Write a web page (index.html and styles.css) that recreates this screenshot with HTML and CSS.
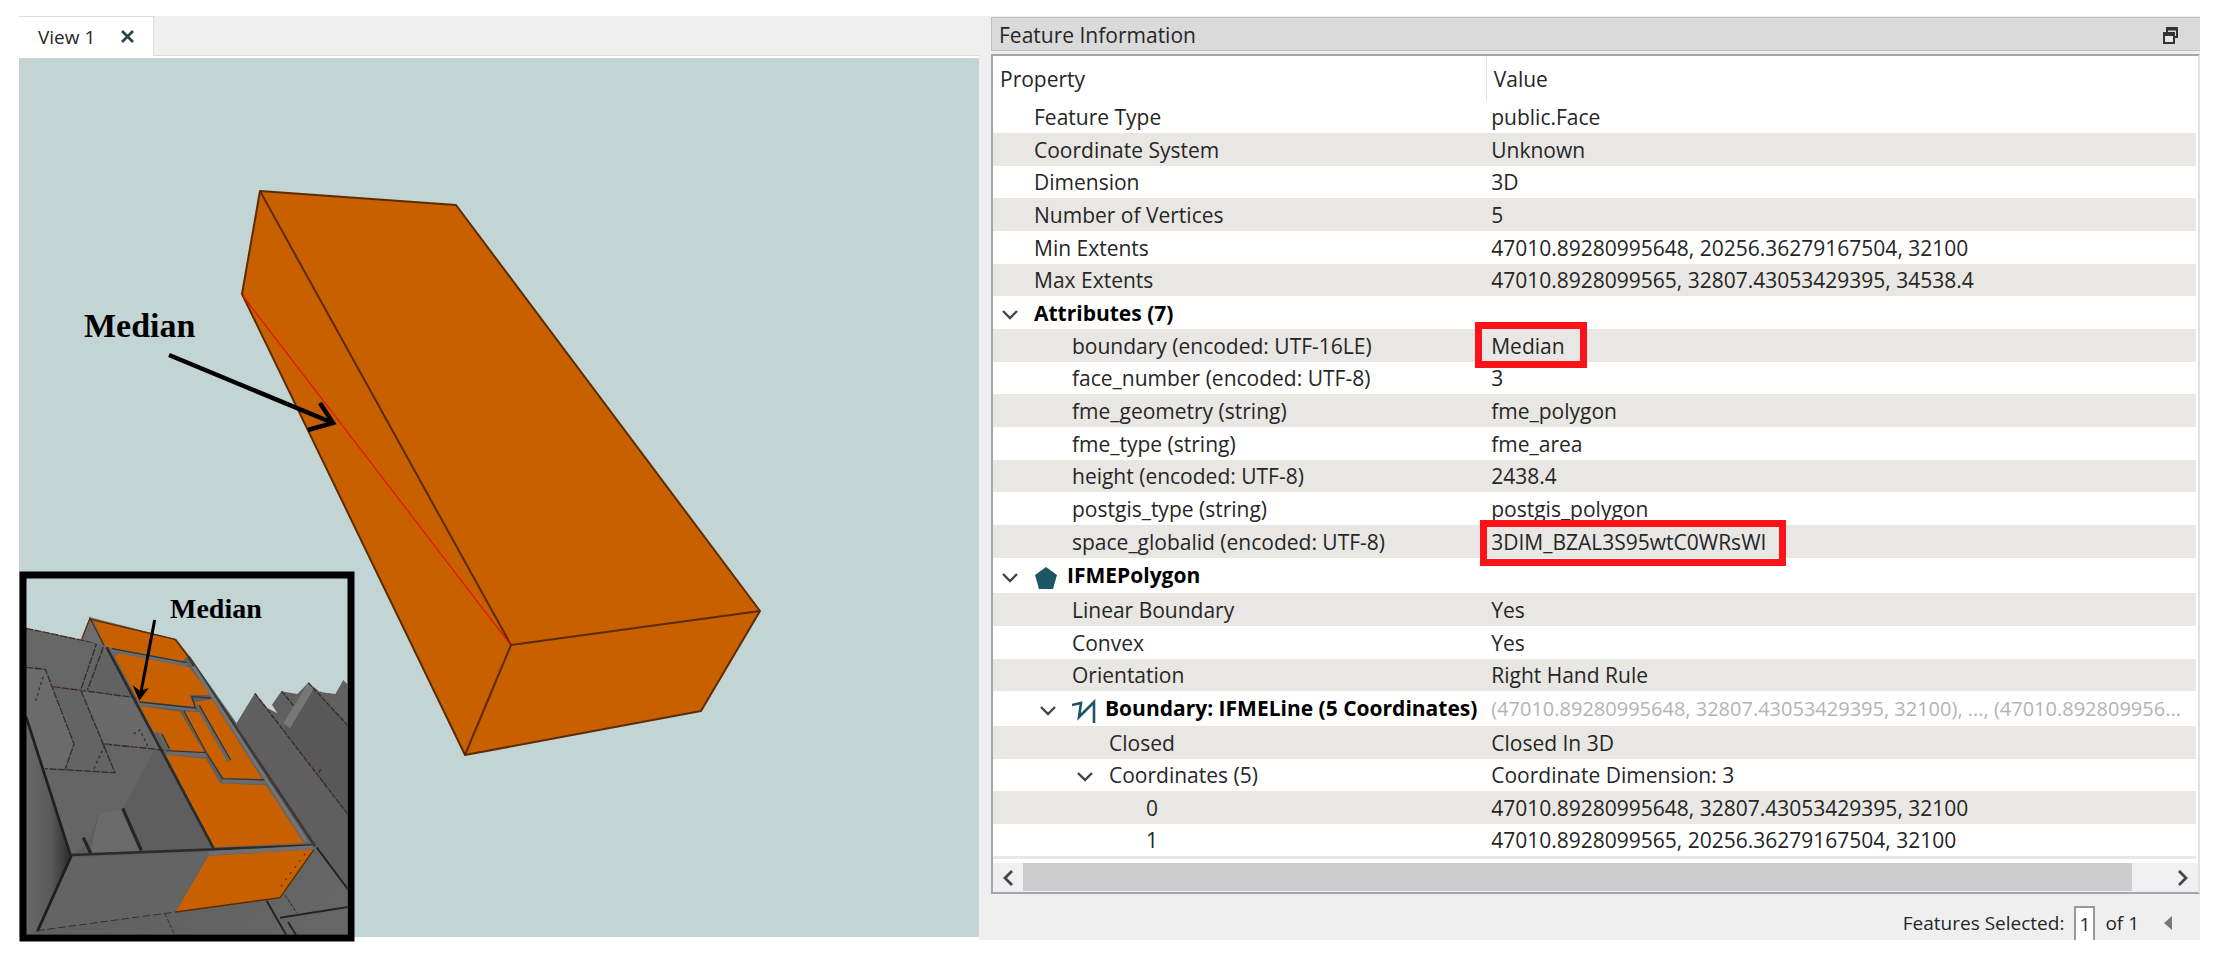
FILE: index.html
```
<!DOCTYPE html>
<html lang="en">
<head>
    <meta charset="UTF-8">
    <meta name="viewport" content="width=device-width, initial-scale=1.0">
    <title>Feature Information</title>
    <link rel="stylesheet" href="styles.css">
</head>
<body>
    <!-- Shared icons -->
    <svg class="icon-defs" aria-hidden="true">
        <symbol id="chevron-down" viewBox="0 0 16 10">
            <path d="M1 1 L8 8 L15 1" fill="none" stroke="#444" stroke-width="2.4"/>
        </symbol>
    </svg>

    <main class="workspace">
        <!-- 3D view -->
        <section class="view-pane">
            <div class="tab-bar">
                <div class="tab">
                    <span>View 1</span>
                    <button class="tab-close" aria-label="Close view">
                        <svg width="13" height="13" viewBox="0 0 13 13"><path d="M1 1 L12 12 M12 1 L1 12" stroke="#2f4650" stroke-width="2.8"/></svg>
                    </button>
                </div>
            </div>
            <div class="canvas">
                <svg class="scene" viewBox="19 58 960 880" role="img" aria-label="Solid with its median boundary">
                    <defs>
                        <linearGradient id="wall" x1="0" y1="0" x2="1" y2="1">
                            <stop offset="0" stop-color="#707070"/>
                            <stop offset="0.35" stop-color="#5d5d5d"/>
                            <stop offset="1" stop-color="#676767"/>
                        </linearGradient>
                        <linearGradient id="shade" x1="0" y1="0" x2="1" y2="0">
                            <stop offset="0" stop-color="#686868"/>
                            <stop offset="0.55" stop-color="#5a5a5a"/>
                            <stop offset="1" stop-color="#2b2b2b"/>
                        </linearGradient>
                        <clipPath id="insetClip"><rect x="78" y="56" width="964" height="1068"/></clipPath>
                    </defs>

                    <!-- Solid -->
                    <g stroke="#5c2b00" stroke-width="2" stroke-linejoin="round">
                        <path d="M260 191 L456 205 L760 611 L701 711 L465 755 L242 294 Z" fill="#c86000"/>
                        <path d="M260 191 L511 645 L760 611 M511 645 L465 755" fill="none"/>
                    </g>
                    <path d="M243 296 L510 644" stroke="#e01800" stroke-width="1.3"/>
                    <path d="M169 355 L333 423 M320 403 L333 423 L308 430" fill="none" stroke="#000" stroke-width="4.5"/>
                    <text class="scene-label" x="84" y="337">Median</text>

                    <!-- Inset: building overview -->
                    <rect x="23" y="575" width="328" height="363" fill="#c3d4d4"/>
                    <g transform="translate(0 560) scale(0.33333)">
                        <g clip-path="url(#insetClip)">
                            <path d="M78 205 L245 240 L270 172 L530 238 L570 290 L710 490 L765 400 L802 444 L832 460 L816 434 L844 394 L892 402 L925 368 L960 396 L1006 402 L1030 360 L1045 376 V1130 H78 Z" fill="url(#wall)"/>

                            <!-- Roofs on the right -->
                            <path d="M765 400 L1045 765 V990 L950 862 L710 490 Z" fill="#5f5f5f"/>
                            <path d="M925 368 L1045 498 V765 L868 535 L850 505 Z" fill="#585858"/>
                            <path d="M925 368 L942 384 L870 505 L850 490 Z" fill="#777"/>
                            <path d="M765 400 L1045 765 M925 368 L1045 498 M845 394 L880 436" fill="none" stroke="#2c2c2c" stroke-width="4" stroke-dasharray="16 4"/>
                            <path d="M770 408 L1045 767 M930 374 L1045 496 M960 396 L1040 414" fill="none" stroke="#9c2a2a" stroke-width="3" stroke-dasharray="5 22"/>
                            <path d="M962 628 L956 638" stroke="#333" stroke-width="5"/>
                            <path d="M950 862 L1045 990 M840 1073 L1045 1041 M800 1022 L858 1124 M864 1086 L888 1124" fill="none" stroke="#242424" stroke-width="6"/>
                            <path d="M856 1006 L890 1058" stroke="#222" stroke-width="3" stroke-dasharray="10 5"/>

                            <!-- Left rooms -->
                            <path d="M78 205 L290 250 L243 388 L160 380 L136 328 L78 322 Z" fill="#666"/>
                            <path d="M300 255 L415 425 L380 412 L262 394 Z" fill="#626262"/>
                            <path d="M78 322 L136 328 L222 552 L196 626 L134 626 L78 460 Z" fill="#6b6b6b"/>
                            <path d="M160 380 L243 392 L345 638 L196 628 L224 556 Z" fill="#646464"/>
                            <path d="M245 390 L412 414 L490 570 L314 552 Z" fill="#6a6a6a"/>
                            <path d="M134 626 L345 638 L314 554 L465 568 L385 745 L295 760 L262 855 L213 885 Z" fill="#656565"/>
                            <path d="M465 568 L490 570 L640 862 L425 872 L370 745 Z" fill="#5e5e5e"/>
                            <path d="M298 760 L370 745 L425 872 L270 880 Z" fill="#6b6b6b"/>
                            <path d="M78 460 L213 890 L115 1112 L78 1124 Z" fill="url(#shade)"/>
                            <path d="M215 892 L622 880 L527 1058 L120 1110 Z" fill="#646464"/>
                            <path d="M78 205 L290 250 L243 388 M160 380 L412 414 M78 322 L136 328 L222 552 L196 626 M243 392 L345 638 L134 626 M314 552 L490 570 M310 262 L262 390" fill="none" stroke="#2f2f2f" stroke-width="4" stroke-dasharray="22 4"/>
                            <path d="M82 206 L290 250 M165 380 L412 414 M320 554 L470 566" fill="none" stroke="#a33" stroke-width="3" stroke-dasharray="6 34"/>
                            <path d="M400 522 L420 510 L446 564 M130 350 L104 430 M314 556 L280 630" fill="none" stroke="#333" stroke-width="4" stroke-dasharray="9 8"/>
                            <path d="M368 745 L424 872 M250 833 L272 880" stroke="#262626" stroke-width="10"/>
                            <path d="M78 470 L213 890 L112 1114" fill="none" stroke="#1f1f1f" stroke-width="8"/>
                            <path d="M110 1112 L527 1056" stroke="#303030" stroke-width="3" stroke-dasharray="24 8"/>
                            <path d="M495 1062 L524 1124" stroke="#303030" stroke-width="3" stroke-dasharray="12 5"/>

                            <!-- Selected unit -->
                            <path d="M272 175 L325 262 L247 238 Z" fill="#6e6e6e"/>
                            <g fill="#c86000">
                                <path d="M280 179 L525 238 L562 290 L545 304 L318 260 Z"/>
                                <path d="M345 290 L360 279 L568 322 L632 404 L568 406 L584 440 L415 424 Z"/>
                                <path d="M420 438 L540 455 L614 578 L504 572 L480 520 L462 516 Z"/>
                                <path d="M550 454 L596 456 L584 426 L636 418 L786 657 L672 655 L618 580 Z"/>
                                <path d="M498 584 L618 596 L660 670 L798 676 L912 850 L640 862 Z"/>
                                <path d="M625 888 L942 868 L840 1013 L527 1056 Z"/>
                            </g>
                            <path d="M336 270 L562 314 M418 430 L586 448 M500 578 L618 586 M668 662 L796 666" fill="none" stroke="#6c6c6c" stroke-width="12"/>
                            <path d="M592 436 L688 604" stroke="#666" stroke-width="12"/>
                            <path d="M478 520 L508 572" stroke="#666" stroke-width="12"/>
                            <path d="M598 436 L692 600 M552 453 L618 576 L668 656 L796 660 M418 426 L586 444 L576 410 L632 414 M500 572 L618 578 M336 266 L560 308 M486 522 L508 566" fill="none" stroke="#343434" stroke-width="4"/>
                            <path d="M320 262 L640 864 M213 885 L945 856" fill="none" stroke="#2b2b2b" stroke-width="8"/>
                            <path d="M565 290 L945 858" fill="none" stroke="#3a3a3a" stroke-width="9"/>
                            <path d="M580 320 L920 846" fill="none" stroke="#747474" stroke-width="10"/>
                            <path d="M625 880 L940 862" stroke="#707070" stroke-width="12"/>
                            <path d="M722 510 L945 852" fill="none" stroke="#b23030" stroke-width="3" stroke-dasharray="6 20"/>
                            <path d="M245 238 L270 174 L312 256 M272 178 L525 238 L568 294 M942 868 L840 1013 L527 1056" fill="none" stroke="#5c2b00" stroke-width="4"/>
                            <path d="M915 882 L842 980" stroke="#5c2b00" stroke-width="4" stroke-dasharray="5 18"/>
                            <path d="M464 180 L420 412" stroke="#000" stroke-width="9"/>
                            <path d="M398 376 L420 392 L446 384 L418 422 Z" fill="#000"/>
                        </g>
                    </g>
                    <text class="inset-label" x="170" y="618">Median</text>
                    <rect x="23" y="575" width="328" height="363" fill="none" stroke="#000" stroke-width="7"/>
                </svg>
            </div>
        </section>

        <!-- Feature information -->
        <section class="info-pane">
            <header class="dock-title">
                <h2>Feature Information</h2>
                <button class="dock-float" aria-label="Float panel">
                    <svg width="15" height="17" viewBox="0 0 15 17">
                        <path d="M4 5 V1 H14 V10 H11" fill="none" stroke="#333" stroke-width="2"/>
                        <path d="M3.5 2 H14" stroke="#333" stroke-width="3"/>
                        <rect x="1" y="6" width="10" height="10" fill="#e8e8e8" stroke="#333" stroke-width="2"/>
                        <path d="M0 7.5 H12" stroke="#333" stroke-width="3"/>
                    </svg>
                </button>
            </header>

            <div class="tree">
                <div class="tree-rows">
                    <table>
                        <colgroup>
                            <col class="col-property">
                            <col>
                        </colgroup>
                        <thead>
                            <tr><th scope="col">Property</th><th scope="col">Value</th></tr>
                        </thead>
                        <tbody>
                            <tr><td class="level-1">Feature Type</td><td>public.Face</td></tr>
                            <tr><td class="level-1">Coordinate System</td><td>Unknown</td></tr>
                            <tr><td class="level-1">Dimension</td><td>3D</td></tr>
                            <tr><td class="level-1">Number of Vertices</td><td>5</td></tr>
                            <tr><td class="level-1">Min Extents</td><td>47010.89280995648, 20256.36279167504, 32100</td></tr>
                            <tr><td class="level-1">Max Extents</td><td>47010.8928099565, 32807.43053429395, 34538.4</td></tr>
                            <tr class="group"><td class="level-1"><button class="toggle" aria-label="Collapse attributes"><svg width="16" height="10"><use href="#chevron-down"/></svg></button>Attributes (7)</td><td></td></tr>
                            <tr><td class="level-2">boundary (encoded: UTF-16LE)</td><td><span class="marked">Median<span class="mark mark-boundary"></span></span></td></tr>
                            <tr><td class="level-2">face_number (encoded: UTF-8)</td><td>3</td></tr>
                            <tr><td class="level-2">fme_geometry (string)</td><td>fme_polygon</td></tr>
                            <tr><td class="level-2">fme_type (string)</td><td>fme_area</td></tr>
                            <tr><td class="level-2">height (encoded: UTF-8)</td><td>2438.4</td></tr>
                            <tr><td class="level-2">postgis_type (string)</td><td>postgis_polygon</td></tr>
                            <tr><td class="level-2">space_globalid (encoded: UTF-8)</td><td><span class="marked">3DIM_BZAL3S95wtC0WRsWI<span class="mark mark-space"></span></span></td></tr>
                            <tr class="group tall">
                                <td class="level-1"><button class="toggle" aria-label="Collapse polygon"><svg width="16" height="10"><use href="#chevron-down"/></svg></button><svg class="type-icon" width="24" height="24" viewBox="0 0 24 24"><path d="M12 1 L23 9 L19 23 H5 L1 9 Z" fill="#1d5565"/></svg>IFMEPolygon</td>
                                <td></td>
                            </tr>
                            <tr><td class="level-2">Linear Boundary</td><td>Yes</td></tr>
                            <tr><td class="level-2">Convex</td><td>Yes</td></tr>
                            <tr><td class="level-2">Orientation</td><td>Right Hand Rule</td></tr>
                            <tr class="group tall">
                                <td class="level-2"><button class="toggle" aria-label="Collapse boundary"><svg width="16" height="10"><use href="#chevron-down"/></svg></button><svg class="type-icon" width="24" height="24" viewBox="0 0 24 24"><path d="M0 6 L9 4 L7 18 L22 3 V24" fill="none" stroke="#1d5565" stroke-width="2.6"/></svg>Boundary: IFMELine (5 Coordinates)</td>
                                <td class="preview">(47010.89280995648, 32807.43053429395, 32100), ..., (47010.892809956...</td>
                            </tr>
                            <tr><td class="level-3">Closed</td><td>Closed In 3D</td></tr>
                            <tr><td class="level-3"><button class="toggle" aria-label="Collapse coordinates"><svg width="16" height="10"><use href="#chevron-down"/></svg></button>Coordinates (5)</td><td>Coordinate Dimension: 3</td></tr>
                            <tr><td class="level-4">0</td><td>47010.89280995648, 32807.43053429395, 32100</td></tr>
                            <tr><td class="level-4">1</td><td>47010.8928099565, 20256.36279167504, 32100</td></tr>
                        </tbody>
                    </table>
                </div>
                <div class="scrollbar">
                    <button aria-label="Scroll left"><svg width="10" height="16" viewBox="0 0 10 16"><path d="M9 1 L2 8 L9 15" fill="none" stroke="#444" stroke-width="2.8"/></svg></button>
                    <div class="track"><div class="thumb"></div></div>
                    <button aria-label="Scroll right"><svg width="10" height="16" viewBox="0 0 10 16"><path d="M1 1 L8 8 L1 15" fill="none" stroke="#444" stroke-width="2.8"/></svg></button>
                </div>
            </div>

            <footer class="selection-bar">
                <label for="featureIndex">Features Selected:</label>
                <input id="featureIndex" type="text" value="1">
                <span>of 1</span>
                <button aria-label="Previous feature"><svg width="8" height="14" viewBox="0 0 8 14"><path d="M8 0 V14 L0 7 Z" fill="#777"/></svg></button>
            </footer>
        </section>
    </main>
</body>
</html>
```
FILE: styles.css
```
/* General Styles */
* {
    box-sizing: border-box;
}

body {
    margin: 0;
    background: #fff;
    color: #262626;
    font-family: "Open Sans", "Noto Sans", sans-serif;
    font-size: 21px;
}

button {
    padding: 0;
    border: none;
    background: none;
    cursor: pointer;
}

svg {
    display: block;
}

.icon-defs {
    display: none;
}

.workspace {
    display: grid;
    grid-template-columns: 960fr 1221fr;
    min-height: 100vh;
    padding: 16px 16px 21px 19px;
}

/* 3D view */
.view-pane {
    display: flex;
    flex-direction: column;
    min-width: 0;
}

.tab-bar {
    display: flex;
    height: 42px;
    background: #efefef;
    border-bottom: 2px solid #fff;
    box-shadow: inset 0 -1px #dcdcdc;
}

.tab {
    display: flex;
    align-items: center;
    gap: 26px;
    padding: 0 19px;
    background: #fff;
    border-top: 1px solid #ddd;
    border-right: 1px solid #ddd;
    font-size: 19px;
}

.canvas {
    flex: 1;
    margin-bottom: 3px;
    background: #c3d4d4;
}

.scene {
    width: 100%;
    height: auto;
    margin-bottom: -3px;
    overflow: visible;
}

.scene-label,
.inset-label {
    font-family: "Liberation Serif", serif;
    font-weight: bold;
    fill: #000;
}

.scene-label {
    font-size: 34px;
}

.inset-label {
    font-size: 28px;
}

/* Feature information */
.info-pane {
    display: flex;
    flex-direction: column;
    min-width: 0;
    padding: 1px 0 0 12px;
    background: #efefef;
}

.dock-title {
    display: flex;
    align-items: center;
    justify-content: space-between;
    height: 34px;
    margin-bottom: 3px;
    padding: 2px 22px 0 7px;
    background: #dadada;
    border: 1px solid #bfbfbf;
    border-right: none;
}

.dock-title h2 {
    margin: 0;
    font-size: 21px;
    font-weight: normal;
}

.tree {
    display: flex;
    flex-direction: column;
    flex: 1;
    background: #fff;
    border: 2px solid #a3a7ad;
    border-right: 2px solid #e2e2e2;
}

.tree-rows {
    flex: 1;
    padding-right: 2px;
}

table {
    width: 100%;
    table-layout: fixed;
    border-collapse: collapse;
    border-bottom: 3px solid #e9e7e3;
}

.col-property {
    width: 41%;
}

th,
td {
    padding: 0 0 0 5px;
    line-height: 28px;
    text-align: left;
    white-space: nowrap;
    overflow: hidden;
}

th {
    height: 44px;
    padding: 2px 7px 0;
    font-weight: normal;
}

th + th {
    border-left: 1px solid #e2e2e2;
}

tbody tr {
    height: 33px;
}

tbody tr:nth-child(3n) {
    height: 32px;
}

tbody tr:nth-child(even) {
    background: #e9e7e3;
}

tbody tr.group.tall {
    height: 35px;
}

.group td:first-child {
    color: #000;
    font-weight: bold;
}

.level-1 {
    padding-left: 41px;
}

.level-2 {
    padding-left: 79px;
}

.level-3 {
    padding-left: 116px;
}

.level-4 {
    padding-left: 153px;
}

.toggle {
    width: 37px;
    margin-left: -37px;
    padding-left: 5px;
    vertical-align: middle;
}

.type-icon {
    display: inline-block;
    margin-right: 9px;
    vertical-align: middle;
}

.preview {
    color: #b4b4b4;
    font-size: 20px;
}

/* Red call-outs around values */
.marked {
    position: relative;
}

td:has(.marked) {
    overflow: visible;
}

.mark {
    position: absolute;
    border: 7px solid #fd1219;
}

.mark-boundary {
    inset: -10px -22px -8px -16px;
}

.mark-space {
    inset: -8px -20px -10px -11px;
}

.scrollbar {
    display: flex;
    height: 29px;
    background: #f0f0f0;
}

.scrollbar button {
    display: flex;
    align-items: center;
    justify-content: center;
    width: 30px;
}

.track {
    flex: 1;
    padding-right: 36px;
}

.thumb {
    height: 28px;
    background: #cdcdcd;
}

.selection-bar {
    display: flex;
    align-items: center;
    justify-content: flex-end;
    gap: 10px;
    height: 46px;
    padding: 12px 28px 0 0;
    font-size: 19px;
}

.selection-bar input {
    width: 21px;
    height: 34px;
    padding: 0 3px;
    border: 2px solid #999;
    border-bottom: none;
    background: #fff;
    color: inherit;
    font: inherit;
}

.selection-bar button {
    margin-left: 15px;
}
```
